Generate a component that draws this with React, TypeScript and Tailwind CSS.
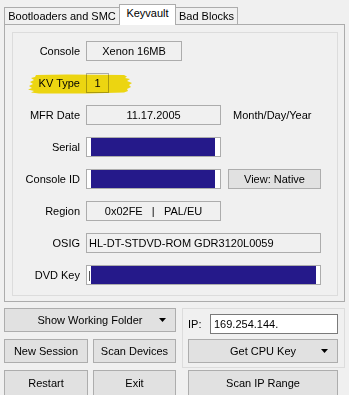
import type { ReactNode } from 'react'

const font = { fontFamily: '"Liberation Sans", Arial, sans-serif' }

function Arrow() {
  return (
    <svg width="7" height="4" viewBox="0 0 7 4" className="shrink-0">
      <path d="M0 0H7L3.5 4Z" fill="#000" />
    </svg>
  )
}

function Btn({ children, className = '', arrow = false }: { children: ReactNode; className?: string; arrow?: boolean }) {
  return (
    <div className={`relative flex items-center justify-center bg-[#e1e1e1] border border-[#adadad] ${className}`}>
      <span>{children}</span>
      {arrow && (
        <span className="absolute right-[9px] top-1/2 -translate-y-1/2 flex">
          <Arrow />
        </span>
      )}
    </div>
  )
}

function Row({ label, children }: { label: string; children: ReactNode }) {
  return (
    <div className="flex items-center h-[20px]">
      <div className="w-[67px] text-right">{label}</div>
      <div className="ml-[6px] flex items-center">{children}</div>
    </div>
  )
}

function Field({ children, className = '', align = 'center' }: { children?: ReactNode; className?: string; align?: 'center' | 'left' }) {
  return (
    <div
      className={`h-[20px] border border-[#acacac] flex items-center whitespace-pre ${
        align === 'center' ? 'justify-center' : 'justify-start pl-[2px]'
      } ${className}`}
    >
      {children}
    </div>
  )
}

function Redacted({ className = '' }: { className?: string }) {
  return (
    <div className={`h-[20px] border border-[#acacac] bg-white flex items-stretch pl-[4px] pr-[5px] ${className}`}>
      <div className="flex-1 bg-[#25198a]" />
    </div>
  )
}

export default function App() {
  return (
    <div className="relative w-[349px] h-[395px] overflow-hidden bg-[#f0f0f0] text-[11px] text-black leading-none" style={font}>
      {/* tab strip */}
      <div className="flex items-end h-[24px] pl-[4px]">
        <div className="w-[115px] h-[17px] border-l border-t border-[#acacac] flex items-center justify-center pt-[1px]">
          Bootloaders and SMC
        </div>
        <div className="relative z-10 w-[57px] h-[21px] -mb-[1px] bg-white border-l border-t border-r border-[#acacac] flex items-center justify-center pb-[3px]">
          Keyvault
        </div>
        <div className="w-[62px] h-[17px] border-t border-r border-[#acacac] flex items-center justify-center pt-[1px]">
          Bad Blocks
        </div>
      </div>

      {/* tab page */}
      <div className="ml-[4px] w-[341px] h-[278px] border border-[#acacac] pt-[7px] pl-[7px]">
        <div className="w-[326px] h-[264px] border border-[#dcdcdc] pt-[8px] flex flex-col gap-[12px]">
          <Row label="Console">
            <Field className="w-[96px]">Xenon 16MB</Field>
          </Row>
          <Row label="KV Type">
            <Field className="w-[23px]">1</Field>
          </Row>
          <Row label="MFR Date">
            <Field className="w-[135px]">11.17.2005</Field>
            <span className="ml-[12px]">Month/Day/Year</span>
          </Row>
          <Row label="Serial">
            <Redacted className="w-[135px]" />
          </Row>
          <Row label="Console ID">
            <Redacted className="w-[135px]" />
            <Btn className="ml-[7px] w-[93px] h-[20px]">View: Native</Btn>
          </Row>
          <Row label="Region">
            <Field className="w-[135px]">0x02FE   |   PAL/EU</Field>
          </Row>
          <Row label="OSIG">
            <Field className="w-[235px]" align="left">HL-DT-STDVD-ROM GDR3120L0059</Field>
          </Row>
          <Row label="DVD Key">
            <div className="relative w-[235px] h-[20px] border border-[#acacac] bg-white flex items-stretch pl-[4px] pr-[4px]">
              <div className="absolute left-[2px] top-[5px] w-[1px] h-[10px] bg-[#555]" />
              <div className="flex-1 bg-[#25198a]" />
            </div>
          </Row>
        </div>
      </div>

      {/* bottom controls */}
      <div className="flex mt-[6px] pl-[4px]">
        <div className="w-[172px] flex flex-col">
          <Btn className="h-[24px] w-[172px]" arrow>
            Show Working Folder
          </Btn>
          <div className="flex gap-[5px] mt-[7px]">
            <Btn className="h-[24px] w-[84px]">New Session</Btn>
            <Btn className="h-[24px] w-[83px]">Scan Devices</Btn>
          </div>
          <div className="flex gap-[5px] mt-[7px]">
            <Btn className="h-[26px] w-[84px]">Restart</Btn>
            <Btn className="h-[26px] w-[83px]">Exit</Btn>
          </div>
        </div>
        <div className="ml-[6px] w-[163px] flex flex-col">
          <div className="h-[60px] border border-[#dcdcdc] pt-[5px] pl-[5px]">
            <div className="flex items-center h-[20px]">
              <span className="w-[22px]">IP:</span>
              <div className="w-[128px] h-[20px] bg-white border border-[#7a7a7a] flex items-center pl-[3px]">169.254.144.</div>
            </div>
            <Btn className="mt-[5px] w-[150px] h-[24px]" arrow>
              Get CPU Key
            </Btn>
          </div>
          <Btn className="mt-[2px] ml-[6px] w-[150px] h-[26px]">Scan IP Range</Btn>
        </div>
      </div>

      {/* highlighter mark over KV Type */}
      <svg
        className="absolute left-[27px] top-[74px] mix-blend-multiply pointer-events-none"
        width="106"
        height="20"
        viewBox="0 0 106 20"
      >
        <path
          d="M9 1L40 0.5L97 1L100 2.5L98 4L103 5L100 7L105 9L102 11L104 13L100 15L101 17L97 18.5L60 19.5L12 19.5L4 18.5L7 17L1 15.5L5 14L2 12L6 10L3 8L7 6L4 4L8 3Z"
          fill="#fbe312"
        />
      </svg>
    </div>
  )
}
